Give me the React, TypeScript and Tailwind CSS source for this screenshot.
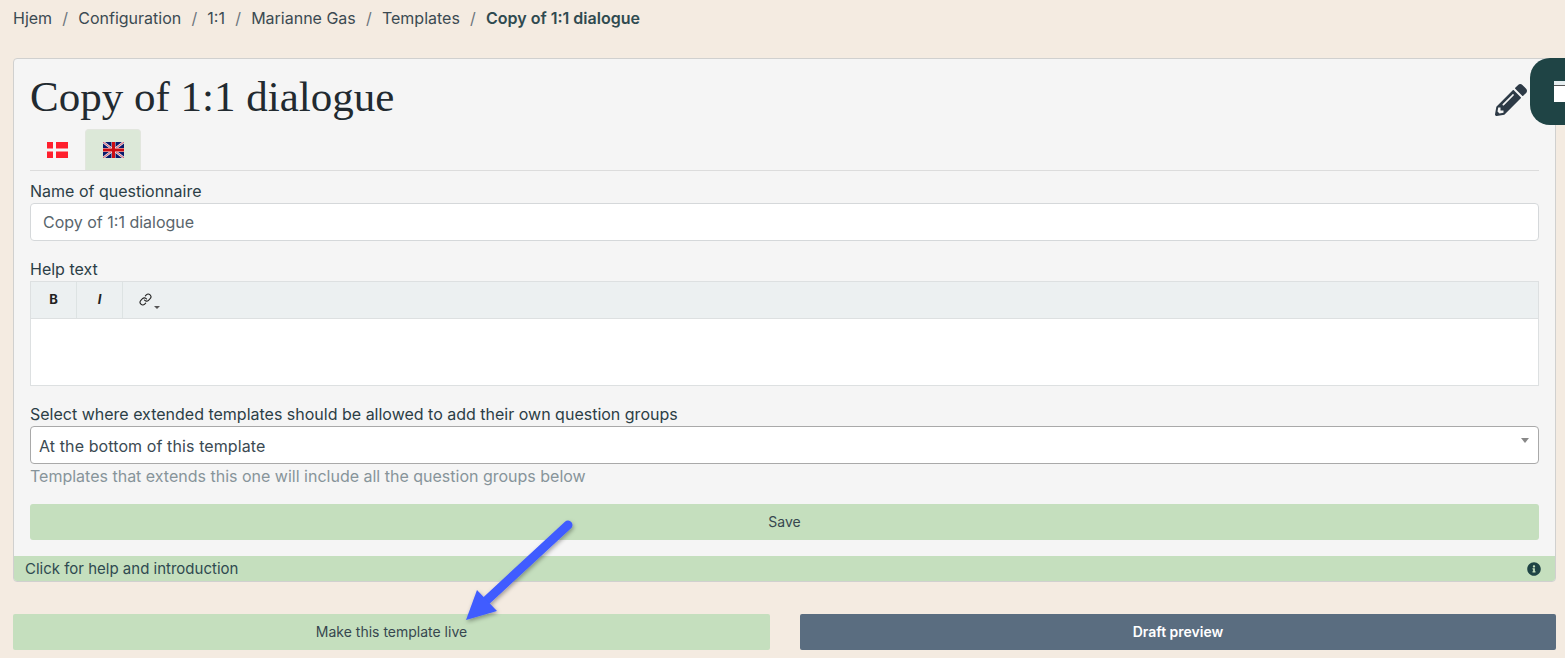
import { Link } from 'lucide-react';
import { FaPencilAlt, FaInfoCircle } from 'react-icons/fa';

const crumbs = ['Hjem', 'Configuration', '1:1', 'Marianne Gas', 'Templates'];

function DanishFlag() {
  return (
    <svg width="21" height="16" viewBox="0 0 21 16">
      <rect width="21" height="16" fill="#ff1f2d" />
      <rect x="6" width="3" height="16" fill="#f5f5f5" />
      <rect y="6.500" width="21" height="3" fill="#f5f5f5" />
    </svg>
  );
}

function BritishFlag() {
  return (
    <svg width="21" height="16" viewBox="0 0 21 16">
      <rect width="21" height="16" fill="#0a1a6b" />
      <path d="M0 0L21 16M21 0L0 16" stroke="#e8dfe6" strokeWidth="2.500" />
      <path d="M0 0L21 16M21 0L0 16" stroke="#d8354a" strokeWidth="0.800" />
      <rect x="8.500" width="4" height="16" fill="#f4e6e6" />
      <rect y="6" width="21" height="4" fill="#f4e6e6" />
      <rect x="9" width="3" height="16" fill="#cc0c12" />
      <rect y="6.500" width="21" height="3" fill="#cc0c12" />
    </svg>
  );
}

export default function App() {
  return (
    <div className="relative h-[658px] w-[1565px] overflow-hidden bg-[#f4ebe1] font-['Inter',sans-serif] text-[16px] text-[#2c3e46]">
      <nav className="flex h-[36px] items-center pl-[13px] text-[#3b4a52]">
        {crumbs.map((c) => (
          <span key={c} className="flex items-center">
            {c}
            <span className="mx-[10.200px] text-[#6c757d]">/</span>
          </span>
        ))}
        <span className="font-semibold text-[#2f4a50]">Copy of 1:1 dialogue</span>
      </nav>

      <div className="mx-[13px] mt-[22px] w-[1543px] overflow-hidden rounded border border-[#d0d0cf] bg-[#f5f5f5]">
        <div className="px-[16px]">
          <h1 className="h-[70px] pt-[8px] font-['Liberation_Serif',serif] text-[43px] leading-[60px] text-[#222a30]">
            Copy of 1:1 dialogue
          </h1>
          <div className="flex h-[42px] border-b border-[#dcdcdc]">
            <div className="flex w-[55px] items-center justify-center">
              <DanishFlag />
            </div>
            <div className="flex w-[56px] items-center justify-center rounded-t border border-b-0 border-[#e2e6de] bg-[#dce8d8]">
              <BritishFlag />
            </div>
          </div>

          <label className="mt-[10px] block leading-[20px]">Name of questionnaire</label>
          <div className="mt-[2px] flex h-[38px] items-center rounded border border-[#d5d8da] bg-white px-[12px] text-[#59656c]">
            Copy of 1:1 dialogue
          </div>

          <label className="mt-[18px] block leading-[20px]">Help text</label>
          <div className="mt-[2px] border border-[#dde0e1] bg-white">
            <div className="flex h-[37px] border-b border-[#dde0e1] bg-[#ecf0f1] text-[13px] text-[#222]">
              <div className="flex w-[46px] items-center justify-center border-r border-[#dde3e3] font-bold">B</div>
              <div className="flex w-[46px] items-center justify-center border-r border-[#dde3e3] font-bold italic">I</div>
              <div className="flex w-[46px] items-center pl-[16px]">
                <Link className="mb-[2px] h-[13px] w-[13px]" strokeWidth={2} />
                <span className="ml-[2px] mt-[15px] h-0 w-0 border-x-[3px] border-t-[3px] border-x-transparent border-t-[#555]" />
              </div>
            </div>
            <div className="h-[66px]" />
          </div>

          <label className="mt-[18px] block leading-[20px]">
            Select where extended templates should be allowed to add their own question groups
          </label>
          <div className="relative mt-[2px] flex h-[38px] items-center rounded border border-[#a9a9a9] bg-white pl-[8px] pt-[2px] tracking-[0.1px] text-[#3b4a52]">
            At the bottom of this template
            <span className="absolute right-[9px] top-[11px] h-0 w-0 border-x-[4px] border-t-[5px] border-x-transparent border-t-[#888]" />
          </div>
          <p className="mt-[1px] leading-[22px] text-[#87949a]">Templates that extends this one will include all the question groups below</p>

          <button className="mt-[17px] block h-[36px] w-full rounded-[3px] bg-[#c5dfbe] pb-[2px] text-[14px] text-[#37474f]">Save</button>
        </div>
        <div className="mt-[16px] flex h-[25px] items-center justify-between bg-[#c5dfbe] pl-[11px] pr-[14px] pt-[1px] text-[15px] text-[#2f4a50]">
          <span>Click for help and introduction</span>
          <FaInfoCircle className="h-[14px] w-[14px] text-[#1f4445]" />
        </div>
      </div>

      <div className="mx-[13px] mt-[32px] flex w-[1543px] gap-[30px]">
        <button className="h-[36px] w-[757px] rounded-[2px] bg-[#c5dfbe] pb-[2px] text-[14px] text-[#37474f]">Make this template live</button>
        <button className="h-[36px] w-[756px] rounded-[2px] bg-[#5a6d80] pb-[2px] text-[14px] font-semibold text-white">Draft preview</button>
      </div>

      <div className="absolute left-[1530px] top-[58px] h-[67px] w-[60px] overflow-hidden rounded-[20px] bg-[#1f4445]">
        <div className="ml-[24px] mt-[23px] h-[21px] w-[30px] bg-white">
          <div className="h-[5px] border-b border-[#555] bg-[#e6eef0]" />
        </div>
      </div>
      <FaPencilAlt className="absolute left-[1495px] top-[84px] h-[32px] w-[32px] text-[#2d3a46]" />

      <svg className="absolute left-[460px] top-[515px]" width="120" height="110" viewBox="0 0 120 110">
        <defs>
          <filter id="arrowShadow" x="-20%" y="-20%" width="140%" height="140%">
            <feDropShadow dx="1" dy="2" stdDeviation="2" floodColor="#000" floodOpacity="0.35" />
          </filter>
        </defs>
        <g filter="url(#arrowShadow)" fill="#3f5cff">
          <path d="M108 10L27 85" stroke="#3f5cff" strokeWidth="9" strokeLinecap="round" fill="none" />
          <path d="M6 105L17 75L37 96Z" />
        </g>
      </svg>
    </div>
  );
}
